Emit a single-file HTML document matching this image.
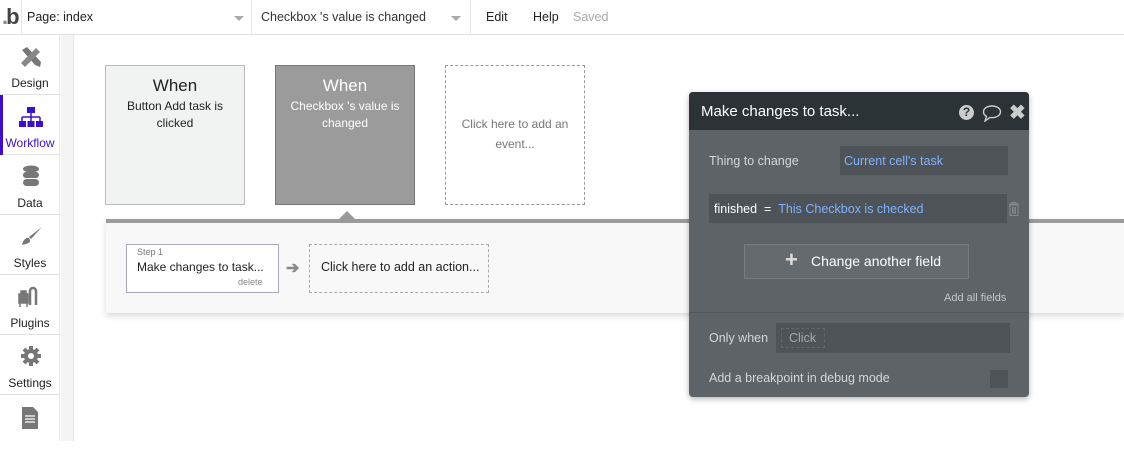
<!DOCTYPE html>
<html><head><style>
*{box-sizing:border-box;margin:0;padding:0}
body{width:1124px;height:441px;overflow:hidden;background:#fff;font-family:"Liberation Sans",sans-serif;position:relative;color:#222}
.abs{position:absolute}
.top{left:0;top:0;width:1124px;height:35px;border-bottom:1px solid #e2e2e2;background:#fff}
.sep{top:0;width:1px;height:34px;background:#e6e6e6}
.t{font-size:12.5px;white-space:nowrap}
.side{left:0;top:35px;width:60px;height:406px;background:#fff;border-right:1px solid #e6e6e6}
.strip{left:61px;top:35px;width:13px;height:406px;background:#f4f4f4;border-right:1px solid #e6e6e6}
.item{position:absolute;left:0;width:60px;height:60px;border-bottom:1px solid #e2e2e2;text-align:center;font-size:12px}
.item span{position:absolute;left:0;right:0;bottom:4px}
.card{top:65px;width:140px;height:140px;text-align:center;font-size:12px;line-height:17px}
.card h3{font-weight:normal;font-size:17px;margin:11px 0 4px}
.panel{left:689px;top:92px;width:340px;height:305px;background:#5e6367;border-radius:4px;box-shadow:0 2px 6px rgba(0,0,0,.3);overflow:hidden}
.lbl{color:#d4d6d8;font-size:12.5px}
</style></head><body>
<div class="abs top"></div>
<div class="abs" style="left:2px;top:4px;font-size:22px;color:#444;font-weight:bold;line-height:26px;letter-spacing:-2px"><span style="color:#888">.</span>b</div>
<div class="abs sep" style="left:21px"></div>
<div class="abs t" style="left:27px;top:10px">Page: index</div>
<div class="abs" style="left:234px;top:16px;border:5px solid transparent;border-top:5px solid #aaa"></div>
<div class="abs sep" style="left:251px"></div>
<div class="abs t" style="left:261px;top:10px;color:#333">Checkbox 's value is changed</div>
<div class="abs" style="left:451px;top:16px;border:5px solid transparent;border-top:5px solid #aaa"></div>
<div class="abs sep" style="left:470px"></div>
<div class="abs t" style="left:486px;top:10px">Edit</div>
<div class="abs t" style="left:533px;top:10px">Help</div>
<div class="abs t" style="left:573px;top:10px;color:#aaa">Saved</div>

<div class="abs side">
<div class="item" style="top:0"><svg class="abs" style="left:19px;top:10px" width="24" height="24" viewBox="0 0 24 24"><path d="M3 5 L8 2 L22 17 L21 22 L16 20 Z" fill="#777"/><path d="M2 18 L17 3 L21 7 L6 22 Z" fill="#888"/></svg><span>Design</span></div>
<div class="item" style="top:60px;color:#3b10cc"><div class="abs" style="left:0;top:0;width:3px;height:60px;background:#3b10cc"></div><svg class="abs" style="left:18px;top:12px" width="26" height="22" viewBox="0 0 26 22"><rect x="9" y="0" width="8" height="6" fill="#3b10cc"/><path d="M13 6v4M4 10h18M4 10v4M13 10v4M22 10v4" stroke="#3b10cc" stroke-width="1.5" fill="none"/><rect x="1" y="14" width="7" height="6" fill="#3b10cc"/><rect x="9.5" y="14" width="7" height="6" fill="#3b10cc"/><rect x="18" y="14" width="7" height="6" fill="#3b10cc"/></svg><span>Workflow</span></div>
<div class="item" style="top:120px"><svg class="abs" style="left:22px;top:10px" width="18" height="22" viewBox="0 0 18 22"><ellipse cx="9" cy="4" rx="8" ry="3.5" fill="#777"/><rect x="1" y="7" width="16" height="6" rx="3" fill="#777"/><rect x="1" y="14" width="16" height="7" rx="3.5" fill="#777"/></svg><span>Data</span></div>
<div class="item" style="top:180px"><svg class="abs" style="left:20px;top:10px" width="24" height="24" viewBox="0 0 24 24"><path d="M22 2 L11 14 L9 12 Z" fill="#777"/><path d="M9 13 C5 12 3 16 2 20 C6 19 11 18 10 15 Z" fill="#777"/></svg><span>Styles</span></div>
<div class="item" style="top:240px"><svg class="abs" style="left:18px;top:10px" width="24" height="24" viewBox="0 0 24 24"><path d="M1 9 h9 v9 h-9z M3 6h5v3H3z M2 18v4 M9 18v4" fill="#777" stroke="#777" stroke-width="1.5"/><path d="M12 20 V6 a3 3 0 0 1 6 0 V20" stroke="#777" stroke-width="2.5" fill="none"/></svg><span>Plugins</span></div>
<div class="item" style="top:300px"><svg class="abs" style="left:20px;top:10px" width="22" height="22" viewBox="0 0 22 22"><circle cx="11" cy="11" r="7" fill="#777"/><g stroke="#777" stroke-width="4"><path d="M11 1v20M1 11h20M4 4l14 14M18 4L4 18"/></g><circle cx="11" cy="11" r="3" fill="#fff"/></svg><span>Settings</span></div>
<div class="item" style="top:360px;border:none"><svg class="abs" style="left:22px;top:12px" width="16" height="22" viewBox="0 0 16 22"><path d="M0 0h11l5 5v17H0z" fill="#777"/><path d="M3 9h10M3 12h10M3 15h10" stroke="#fff" stroke-width="1.2"/></svg></div>
</div>
<div class="abs strip"></div>

<div class="abs card" style="left:105px;background:#f1f2f2;border:1px solid #bbb"><h3>When</h3>Button Add task is<br>clicked</div>
<div class="abs card" style="left:275px;background:#9b9b9b;border:1px solid #777;color:#fff"><h3>When</h3>Checkbox 's value is<br>changed</div>
<div class="abs card" style="left:445px;border:1px dashed #999;color:#777;line-height:20px;padding-top:48px">Click here to add an<br>event...</div>
<div class="abs" style="left:339px;top:211px;border:8px solid transparent;border-bottom:8px solid #9b9b9b;border-top:0"></div>
<div class="abs" style="left:106px;top:219px;width:1018px;height:94px;background:#f8f8f8;border-top:4px solid #9b9b9b;box-shadow:0 3px 6px rgba(0,0,0,.15)"></div>
<div class="abs" style="left:126px;top:244px;width:153px;height:49px;border:1px solid #aab;background:#fff"></div>
<div class="abs" style="left:137px;top:247px;font-size:9px;color:#777">Step 1</div>
<div class="abs" style="left:137px;top:260px;font-size:12px">Make changes to task...</div>
<div class="abs" style="left:238px;top:277px;font-size:9px;color:#888">delete</div>
<div class="abs" style="left:286px;top:258px;font-size:16px;color:#888;font-weight:bold">➔</div>
<div class="abs" style="left:309px;top:244px;width:180px;height:49px;border:1px dashed #aaa;font-size:12.5px;padding:15px 0 0 11px">Click here to add an action...</div>

<div class="abs panel">
<div class="abs" style="left:0;top:0;width:340px;height:38px;background:#2b3336"></div>
<div class="abs" style="left:12px;top:11px;color:#fff;font-size:15px">Make changes to task...</div>
<div class="abs" style="left:270px;top:13px;width:15px;height:15px;border-radius:50%;background:#ccc;color:#2b3336;font-size:12px;font-weight:bold;text-align:center;line-height:15px">?</div>
<svg class="abs" style="left:293px;top:13px" width="20" height="17" viewBox="0 0 20 17"><path d="M10 1C5 1 1.5 3.5 1.5 7c0 2 1 3.4 3 4.4L3 16l5-3.5c.6.1 1.3.1 2 .1 5 0 8.5-2.6 8.5-5.8S15 1 10 1z" fill="none" stroke="#ccc" stroke-width="1.4"/></svg>
<div class="abs" style="left:320px;top:8px;color:#ccc;font-size:20px;font-weight:bold">✖</div>
<div class="abs lbl" style="left:20px;top:62px">Thing to change</div>
<div class="abs" style="left:151px;top:54px;width:168px;height:29px;background:#4e5357;color:#7fb2ff;font-size:12.5px;padding:8px 4px">Current cell's task</div>
<div class="abs" style="left:20px;top:102px;width:298px;height:29px;background:#4e5357;font-size:12.5px;padding:8px 5px;color:#fff">finished &nbsp;= &nbsp;<span style="color:#7fb2ff">This Checkbox is checked</span></div>
<svg class="abs" style="left:319px;top:110px" width="12" height="14" viewBox="0 0 12 14"><path d="M1 2h10M4 2V0.5h4V2M2 3h8v10.5H2z M4.5 5v7M6 5v7M7.5 5v7" stroke="#888" fill="none"/></svg>
<div class="abs" style="left:55px;top:152px;width:225px;height:35px;background:#656a6e;border:1px solid #777c80;color:#fff;font-size:14px;padding:8px 0 0 40px"><span style="position:absolute;left:40px;top:2px;font-size:22px;font-weight:bold;color:#ddd">+</span><span style="margin-left:26px">Change another field</span></div>
<div class="abs lbl" style="left:255px;top:200px;font-size:11px;color:#c4c6c8">Add all fields</div>
<div class="abs" style="left:0;top:220px;width:340px;height:1px;background:#54585c"></div>
<div class="abs lbl" style="left:20px;top:239px">Only when</div>
<div class="abs" style="left:87px;top:231px;width:234px;height:30px;background:#4e5357"></div>
<div class="abs" style="left:92px;top:236px;width:44px;height:20px;border:1px dashed #666;color:#aaa;font-size:12.5px;padding:2px 0 0 7px">Click</div>
<div class="abs lbl" style="left:20px;top:279px">Add a breakpoint in debug mode</div>
<div class="abs" style="left:301px;top:278px;width:18px;height:18px;background:#4e5357"></div>
</div>
</body></html>
